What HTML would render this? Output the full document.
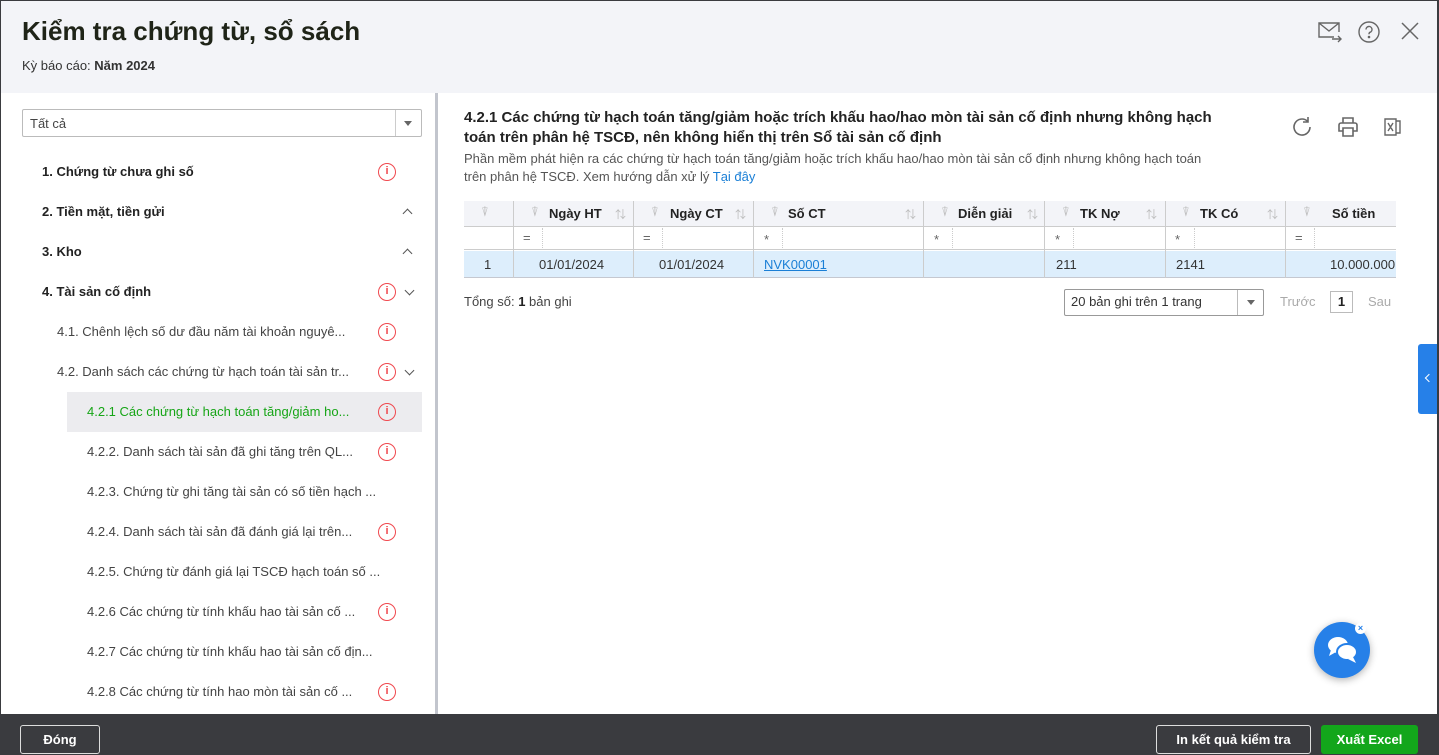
<!DOCTYPE html>
<html><head><meta charset="utf-8"><style>
*{box-sizing:border-box;margin:0;padding:0}
body{width:1439px;height:755px;overflow:hidden;font-family:"Liberation Sans","Noto Sans CJK SC",sans-serif;color:#212121;background:#fff;position:relative;font-size:13px}
.abs{position:absolute}
.frame{position:absolute;left:0;top:0;width:1439px;height:755px;border:1px solid #3a3b3f;border-bottom:none;pointer-events:none}
.hdr{left:0;top:0;width:1439px;height:93px;background:#f3f4f8}
.title{left:22px;top:16px;font-size:26px;font-weight:bold;color:#1f2418}
.sub{left:22px;top:58px;font-size:13px;color:#333}
.item{position:absolute;font-size:13px;white-space:nowrap}
.b{font-weight:bold;color:#222}
.info{position:absolute;width:18px;height:18px;border:1.5px solid #f0484e;border-radius:50%;color:#f0484e;font-size:11px;font-weight:bold;text-align:center;line-height:15px}
.chev{position:absolute;width:7px;height:7px;border-left:1.5px solid #555;border-top:1.5px solid #555}
.cell{position:absolute;height:100%;border-right:1px dotted #ccc}
.ft{left:0;top:714px;width:1439px;height:41px;background:#3a3b3f}
.btn{position:absolute;height:29px;border-radius:3px;font-weight:bold;font-size:13px;text-align:center;line-height:27px}
</style></head><body>
<div class="abs hdr"></div>
<div class="abs title">Kiểm tra chứng từ, sổ sách</div>
<div class="abs sub">Kỳ báo cáo: <b>Năm 2024</b></div>
<svg class="abs" style="left:1316px;top:20px" width="28" height="24" viewBox="0 0 28 24" fill="none" stroke="#666" stroke-width="1.4"><path d="M18 17H3V3h20v9M3 3l10 8 10-8M16 19h9M22 16l3 3-3 3"/></svg>
<svg class="abs" style="left:1357px;top:20px" width="24" height="24" viewBox="0 0 24 24" fill="none" stroke="#666" stroke-width="1.4"><circle cx="12" cy="12" r="10"/><path d="M9 9.5a3 3 0 1 1 4 2.8c-.8.4-1 1-1 2"/><circle cx="12" cy="17" r=".6" fill="#666"/></svg>
<svg class="abs" style="left:1400px;top:21px" width="20" height="20" viewBox="0 0 20 20" stroke="#666" stroke-width="1.5"><path d="M2 2l16 16M18 2L2 18"/></svg>

<div class="abs" style="left:22px;top:109px;width:400px;height:28px;border:1px solid #bbb;border-radius:2px"></div>
<div class="abs" style="left:395px;top:110px;width:1px;height:26px;background:#ccc"></div>
<div class="abs" style="left:404px;top:121px;border:4px solid transparent;border-top:5px solid #666"></div>
<div class="item" style="left:30px;top:116px;color:#444">Tất cả</div>

<div class="item b" style="left:42px;top:164px">1. Chứng từ chưa ghi số</div><div class="info" style="left:378px;top:163px">i</div>
<div class="item b" style="left:42px;top:204px">2. Tiền mặt, tiền gửi</div><div class="chev" style="left:404px;top:210px;transform:rotate(45deg)"></div>
<div class="item b" style="left:42px;top:244px">3. Kho</div><div class="chev" style="left:404px;top:250px;transform:rotate(45deg)"></div>
<div class="item b" style="left:42px;top:284px">4. Tài sản cố định</div><div class="info" style="left:378px;top:283px">i</div><div class="chev" style="left:406px;top:287px;transform:rotate(225deg)"></div>
<div class="item" style="left:57px;top:324px;color:#444">4.1. Chênh lệch số dư đầu năm tài khoản nguyê...</div><div class="info" style="left:378px;top:323px">i</div>
<div class="item" style="left:57px;top:364px;color:#444">4.2. Danh sách các chứng từ hạch toán tài sản tr...</div><div class="info" style="left:378px;top:363px">i</div><div class="chev" style="left:406px;top:367px;transform:rotate(225deg)"></div>
<div class="abs" style="left:67px;top:392px;width:355px;height:40px;background:#ececef"></div>
<div class="item" style="left:87px;top:404px;color:#16a516">4.2.1 Các chứng từ hạch toán tăng/giảm ho...</div><div class="info" style="left:378px;top:403px">i</div>
<div class="item" style="left:87px;top:444px;color:#444">4.2.2. Danh sách tài sản đã ghi tăng trên QL...</div><div class="info" style="left:378px;top:443px">i</div>
<div class="item" style="left:87px;top:484px;color:#444">4.2.3. Chứng từ ghi tăng tài sản có số tiền hạch ...</div>
<div class="item" style="left:87px;top:524px;color:#444">4.2.4. Danh sách tài sản đã đánh giá lại trên...</div><div class="info" style="left:378px;top:523px">i</div>
<div class="item" style="left:87px;top:564px;color:#444">4.2.5. Chứng từ đánh giá lại TSCĐ hạch toán số ...</div>
<div class="item" style="left:87px;top:604px;color:#444">4.2.6 Các chứng từ tính khấu hao tài sản cố ...</div><div class="info" style="left:378px;top:603px">i</div>
<div class="item" style="left:87px;top:644px;color:#444">4.2.7 Các chứng từ tính khấu hao tài sản cố địn...</div>
<div class="item" style="left:87px;top:684px;color:#444">4.2.8 Các chứng từ tính hao mòn tài sản cố ...</div><div class="info" style="left:378px;top:683px">i</div>
<div class="abs" style="left:435px;top:93px;width:3px;height:621px;background:#c2c5cd"></div>

<div class="abs" style="left:464px;top:108px;width:780px;font-size:15px;font-weight:bold;color:#222;line-height:20px">4.2.1 Các chứng từ hạch toán tăng/giảm hoặc trích khấu hao/hao mòn tài sản cố định nhưng không hạch toán trên phân hệ TSCĐ, nên không hiển thị trên Sổ tài sản cố định</div>
<div class="abs" style="left:464px;top:150px;width:755px;font-size:13px;color:#555;line-height:18px">Phần mềm phát hiện ra các chứng từ hạch toán tăng/giảm hoặc trích khấu hao/hao mòn tài sản cố định nhưng không hạch toán trên phân hệ TSCĐ. Xem hướng dẫn xử lý <span style="color:#1a7fd6">Tại đây</span></div>
<svg class="abs" style="left:1290px;top:115px" width="24" height="24" viewBox="0 0 24 24" fill="none" stroke="#666" stroke-width="1.6"><path d="M20 12a8 8 0 1 1-2.5-5.8M18 2v5h-5"/></svg>
<svg class="abs" style="left:1336px;top:115px" width="24" height="24" viewBox="0 0 24 24" fill="none" stroke="#666" stroke-width="1.6"><path d="M7 8V3h10v5M5 8h14a2 2 0 0 1 2 2v6h-4M7 16H3v-6a2 2 0 0 1 2-2M7 13h10v8H7z"/></svg>
<svg class="abs" style="left:1383px;top:116px" width="20" height="22" viewBox="0 0 20 22" fill="none" stroke="#666" stroke-width="1.4"><path d="M2 3h11v16H2zM13 5h4v12h-4M5 7l5 8M10 7l-5 8"/></svg>

<div class="abs" style="left:464px;top:201px;width:932px;height:26px;background:#f3f4f8;border-bottom:1px solid #ccc"></div>
<div class="abs" style="left:464px;top:227px;width:932px;height:23px;border-bottom:1px solid #ccc"></div>
<div class="abs" style="left:464px;top:251px;width:932px;height:27px;background:#ddeefc;border-bottom:1px solid #c5c8d0"></div>
<div class="abs" style="left:464px;top:201px;width:932px;height:77px;font-size:13px">
 <div class="cell" style="left:49px;border-right:1px solid #ccc;width:0"></div>
 <div class="cell" style="left:169px;width:0;border-right:1px solid #ccc"></div>
 <div class="cell" style="left:289px;width:0;border-right:1px solid #ccc"></div>
 <div class="cell" style="left:459px;width:0;border-right:1px solid #ccc"></div>
 <div class="cell" style="left:580px;width:0;border-right:1px solid #ccc"></div>
 <div class="cell" style="left:701px;width:0;border-right:1px solid #ccc"></div>
 <div class="cell" style="left:821px;width:0;border-right:1px solid #ccc"></div>
</div>
<div class="item b" style="left:549px;top:206px">Ngày HT</div>
<div class="item b" style="left:670px;top:206px">Ngày CT</div>
<div class="item b" style="left:788px;top:206px">Số CT</div>
<div class="item b" style="left:958px;top:206px">Diễn giải</div>
<div class="item b" style="left:1080px;top:206px">TK Nợ</div>
<div class="item b" style="left:1200px;top:206px">TK Có</div>
<div class="item b" style="left:1332px;top:206px">Số tiền</div>
<div class="item" style="left:481px;top:204px;color:#bbb">⍒</div>
<div class="item" style="left:531px;top:204px;color:#bbb">⍒</div><div class="item" style="left:615px;top:206px;color:#bbb;font-size:11px">⇅</div>
<div class="item" style="left:651px;top:204px;color:#bbb">⍒</div><div class="item" style="left:735px;top:206px;color:#bbb;font-size:11px">⇅</div>
<div class="item" style="left:771px;top:204px;color:#bbb">⍒</div><div class="item" style="left:905px;top:206px;color:#bbb;font-size:11px">⇅</div>
<div class="item" style="left:941px;top:204px;color:#bbb">⍒</div><div class="item" style="left:1027px;top:206px;color:#bbb;font-size:11px">⇅</div>
<div class="item" style="left:1062px;top:204px;color:#bbb">⍒</div><div class="item" style="left:1146px;top:206px;color:#bbb;font-size:11px">⇅</div>
<div class="item" style="left:1182px;top:204px;color:#bbb">⍒</div><div class="item" style="left:1267px;top:206px;color:#bbb;font-size:11px">⇅</div>
<div class="item" style="left:1303px;top:204px;color:#bbb">⍒</div>
<div class="item" style="left:523px;top:230px;color:#666">=</div><div class="abs" style="left:542px;top:228px;height:22px;border-left:1px dotted #ccc"></div>
<div class="item" style="left:643px;top:230px;color:#666">=</div><div class="abs" style="left:662px;top:228px;height:22px;border-left:1px dotted #ccc"></div>
<div class="item" style="left:764px;top:232px;color:#666">*</div><div class="abs" style="left:782px;top:228px;height:22px;border-left:1px dotted #ccc"></div>
<div class="item" style="left:934px;top:232px;color:#666">*</div><div class="abs" style="left:952px;top:228px;height:22px;border-left:1px dotted #ccc"></div>
<div class="item" style="left:1055px;top:232px;color:#666">*</div><div class="abs" style="left:1073px;top:228px;height:22px;border-left:1px dotted #ccc"></div>
<div class="item" style="left:1175px;top:232px;color:#666">*</div><div class="abs" style="left:1194px;top:228px;height:22px;border-left:1px dotted #ccc"></div>
<div class="item" style="left:1295px;top:230px;color:#666">=</div><div class="abs" style="left:1314px;top:228px;height:22px;border-left:1px dotted #ccc"></div>
<div class="item" style="left:484px;top:257px;color:#333">1</div>
<div class="item" style="left:539px;top:257px;color:#333">01/01/2024</div>
<div class="item" style="left:659px;top:257px;color:#333">01/01/2024</div>
<div class="item" style="left:764px;top:257px;color:#1a7fd6;text-decoration:underline">NVK00001</div>
<div class="item" style="left:1056px;top:257px;color:#333">211</div>
<div class="item" style="left:1176px;top:257px;color:#333">2141</div>
<div class="item" style="left:1330px;top:257px;color:#333">10.000.000</div>

<div class="item" style="left:464px;top:294px;color:#444">Tổng số: <b style="color:#222">1</b> bản ghi</div>
<div class="abs" style="left:1064px;top:289px;width:200px;height:27px;border:1px solid #999;border-radius:2px"></div>
<div class="abs" style="left:1237px;top:290px;width:1px;height:25px;background:#bbb"></div>
<div class="abs" style="left:1247px;top:300px;border:4px solid transparent;border-top:5px solid #666"></div>
<div class="item" style="left:1071px;top:294px;color:#333">20 bản ghi trên 1 trang</div>
<div class="item" style="left:1280px;top:294px;color:#aaa">Trước</div>
<div class="abs" style="left:1330px;top:291px;width:23px;height:22px;border:1px solid #bbb;text-align:center;line-height:20px;font-weight:bold;font-size:13px">1</div>
<div class="item" style="left:1368px;top:294px;color:#aaa">Sau</div>

<div class="abs" style="left:1418px;top:344px;width:21px;height:70px;background:#2680e8;border-radius:3px 0 0 3px"></div>
<div class="abs" style="left:1426px;top:375px;width:6px;height:6px;border-left:1.5px solid #fff;border-bottom:1.5px solid #fff;transform:rotate(45deg)"></div>

<div class="abs" style="left:1314px;top:622px;width:56px;height:56px;border-radius:50%;background:#2680e8;box-shadow:0 2px 8px rgba(0,0,0,.3)"></div>
<svg class="abs" style="left:1325px;top:634px" width="36" height="32" viewBox="0 0 36 32" fill="#fff"><ellipse cx="13" cy="11" rx="10" ry="8"/><path d="M6 16l-2 6 7-4z"/><ellipse cx="22" cy="18" rx="10" ry="8" stroke="#2680e8" stroke-width="2"/><path d="M28 23l3 6-8-4z"/></svg>
<div class="abs" style="left:1355px;top:623px;width:11px;height:11px;border-radius:50%;background:#fff;color:#2680e8;font-size:9px;text-align:center;line-height:11px;font-weight:bold">×</div>

<div class="abs ft"></div>
<div class="btn" style="left:20px;top:725px;width:80px;border:1px solid #ddd;color:#fff">Đóng</div>
<div class="btn" style="left:1156px;top:725px;width:155px;border:1px solid #ddd;color:#fff">In kết quả kiểm tra</div>
<div class="btn" style="left:1321px;top:725px;width:97px;background:#13a61b;color:#fff;line-height:29px">Xuất Excel</div>
<div class="abs" style="left:1437px;top:0;width:2px;height:714px;background:#3a3b3f"></div>
<div class="frame"></div>
</body></html>
